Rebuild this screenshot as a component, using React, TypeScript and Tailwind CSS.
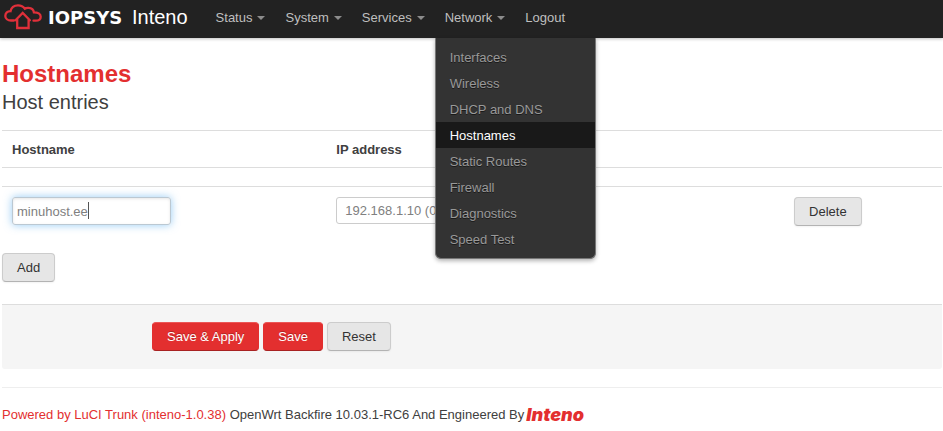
import { useState } from "react";
import clsx from "clsx";

const menus = ["Status", "System", "Services", "Network"];

const networkItems = [
  "Interfaces",
  "Wireless",
  "DHCP and DNS",
  "Hostnames",
  "Static Routes",
  "Firewall",
  "Diagnostics",
  "Speed Test",
];

const buttonBase = "h-[29px] rounded border px-[14px] text-[13px] leading-[18px]";
const buttonGray =
  "border-[#ccc] border-b-[#b3b3b3] bg-[#e6e6e6] text-[#333] shadow-[0_1px_2px_rgba(0,0,0,0.05)]";
const buttonRed =
  "border-[#e32f2f] border-t-[#ec5555] border-b-[#a82222] bg-[#e32f2f] text-white [text-shadow:0_-1px_0_rgba(0,0,0,0.25)]";

const Caret = () => (
  <span className="mt-px border-x-4 border-t-4 border-x-transparent border-t-[#8c8c8c]" />
);

const CloudLogo = () => (
  <svg
    width="38"
    height="26"
    viewBox="0 0 38 26"
    fill="none"
    stroke="#e0303a"
    strokeWidth="2.3"
    strokeLinejoin="miter"
    strokeLinecap="round"
  >
    <path d="M10 16.500H7C3.600 16.500 1.300 14.600 1.300 11.900c0-2.900 2.200-4.800 5.200-4.700C7.300 3.500 10.300 1.300 14 1.300c3 0 5.300 1.100 6.800 3.400 1-.7 2.300-.9 3.600-.8 3 .2 5.200 2 5.500 4.400 3.900 0 6.800 1.700 6.800 4.400 0 2.400-2.100 4-5.100 4H29.500" />
    <path d="M11.500 16.200 18.700 9l7.200 7.200M13.200 15v9h11.400v-8.500" />
  </svg>
);

const Navigation = () => (
  <header className="flex h-[38px] items-start bg-[#222] text-[13px] shadow-[0_1px_3px_rgba(0,0,0,0.25)]">
    <a href="#" className="flex h-[34px] items-center pl-1">
      <CloudLogo />
      <span className="w-[84px] pt-px pl-[6px] font-['DejaVu_Sans'] text-[18px] leading-[34px] font-bold text-white">
        IOPSYS
      </span>
      <span className="pl-[6px] text-[20px] leading-[34px] text-white">Inteno</span>
    </a>
    <nav className="ml-[18px] flex">
      {menus.map((menu) => (
        <div key={menu} className="relative">
          <a
            href="#"
            className="flex h-[38px] items-center gap-[5px] px-[10px] pb-[3px] text-[#bfbfbf]"
          >
            {menu}
            <Caret />
          </a>
          {menu === "Network" && (
            <ul className="absolute top-full left-0 z-10 w-[161px] rounded-b-md border border-t-0 border-[#777] bg-[#333] py-[6px] shadow-[0_2px_4px_rgba(0,0,0,0.3)]">
              {networkItems.map((item) => (
                <li key={item}>
                  <a
                    href="#"
                    className={clsx(
                      "block px-[14px] pt-[5px] pb-[3px] leading-[18px]",
                      item === "Hostnames"
                        ? "bg-[#191919] text-white"
                        : "text-[#999] [text-shadow:0_1px_0_rgba(0,0,0,0.5)]"
                    )}
                  >
                    {item}
                  </a>
                </li>
              ))}
            </ul>
          )}
        </div>
      ))}
      <a href="#" className="flex h-[38px] items-center px-[10px] pb-[3px] text-[#bfbfbf]">
        Logout
      </a>
    </nav>
  </header>
);

const App = () => {
  const [hostname, setHostname] = useState("minuhost.ee");

  return (
    <div className="min-h-screen bg-white font-['Liberation_Sans',Arial,sans-serif] text-[13px] leading-[18px] text-[#404040]">
      <Navigation />

      <main className="pr-px pl-[2px]">
        <form onSubmit={(e) => e.preventDefault()}>
          <h1 className="pt-[22px] text-[24px] leading-7 font-bold text-[#e32f2f]">Hostnames</h1>
          <h2 className="text-[20px] leading-7">Host entries</h2>

          <table className="mt-[14px] w-full table-fixed text-left">
            <colgroup>
              <col className="w-[34.5%]" />
              <col className="w-[48.7%]" />
              <col />
            </colgroup>
            <thead>
              <tr className="border-t border-[#ddd]">
                <th className="px-[10px] pt-[10px] pb-2 font-bold">Hostname</th>
                <th className="px-[10px] pt-[10px] pb-2 font-bold">IP address</th>
                <th />
              </tr>
            </thead>
            <tbody>
              <tr className="border-t border-[#ddd]">
                <td colSpan={3} className="h-[19px]" />
              </tr>
              <tr className="border-t border-[#ddd] align-top">
                <td className="px-[10px] pt-[10px]">
                  <div className="relative w-[159px]">
                    <input
                      type="text"
                      aria-label="Hostname"
                      value={hostname}
                      onChange={(e) => setHostname(e.target.value)}
                      className="block h-7 w-full rounded-[3px] border border-[#bbc8d2] px-1 text-[#808080] shadow-[inset_0_1px_3px_rgba(0,0,0,0.1),0_0_8px_rgba(82,168,236,0.6)] outline-none"
                    />
                    {/* text cursor */}
                    <span className="absolute top-[5px] left-[76px] h-[17px] w-px bg-[#555]" />
                  </div>
                </td>
                <td className="px-[10px] pt-[10px]">
                  <select
                    aria-label="IP address"
                    className="block h-[27px] w-[220px] appearance-none rounded-[3px] border border-[#ccc] bg-white px-2 pt-px text-[#808080]"
                  >
                    <option>192.168.1.10 (00:22:07:44:10:a1)</option>
                  </select>
                </td>
                <td className="px-[10px] pt-[10px]">
                  <button type="button" className={clsx(buttonBase, buttonGray)}>
                    Delete
                  </button>
                </td>
              </tr>
            </tbody>
          </table>

          <button type="button" className={clsx(buttonBase, buttonGray, "mt-[27px] block")}>
            Add
          </button>

          <div className="mt-[22px] flex gap-1 rounded-b-[3px] border-t border-[#ddd] bg-[#f5f5f5] pt-[17px] pb-[18px] pl-[150px]">
            <button type="submit" className={clsx(buttonBase, buttonRed)}>
              Save &amp; Apply
            </button>
            <button type="submit" className={clsx(buttonBase, buttonRed)}>
              Save
            </button>
            <button type="reset" className={clsx(buttonBase, buttonGray)}>
              Reset
            </button>
          </div>
        </form>

        <footer className="mt-[18px] flex items-center gap-[2px] border-t border-[#eee] pt-[18px]">
          <p>
            <a href="#" className="text-[#e32f2f]">
              Powered by LuCI Trunk (inteno-1.0.38)
            </a>{" "}
            OpenWrt Backfire 10.03.1-RC6 And Engineered By
          </p>
          <a
            href="#"
            className="font-['Inter',sans-serif] text-[18px] leading-[18px] font-black text-[#e32f2f] italic"
          >
            Inteno
          </a>
        </footer>
      </main>
    </div>
  );
};

export default App;
